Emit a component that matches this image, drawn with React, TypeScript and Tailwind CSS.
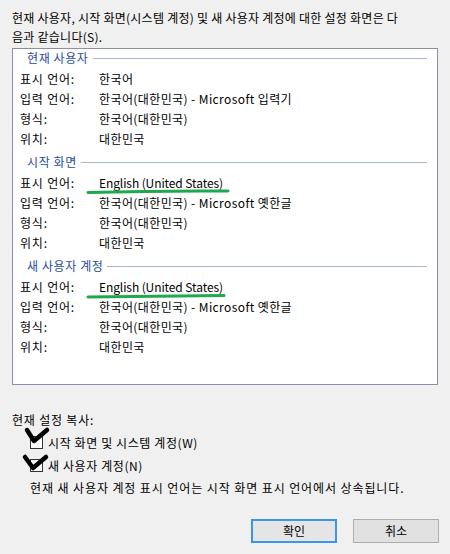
import React from "react";

type Row = { label: string; value: string; latin?: boolean };

const sections: { title: string; rows: Row[] }[] = [
  {
    title: "현재 사용자",
    rows: [
      { label: "표시 언어:", value: "한국어" },
      { label: "입력 언어:", value: "한국어(대한민국) - Microsoft 입력기" },
      { label: "형식:", value: "한국어(대한민국)" },
      { label: "위치:", value: "대한민국" },
    ],
  },
  {
    title: "시작 화면",
    rows: [
      { label: "표시 언어:", value: "English (United States)", latin: true },
      { label: "입력 언어:", value: "한국어(대한민국) - Microsoft 옛한글" },
      { label: "형식:", value: "한국어(대한민국)" },
      { label: "위치:", value: "대한민국" },
    ],
  },
  {
    title: "새 사용자 계정",
    rows: [
      { label: "표시 언어:", value: "English (United States)", latin: true },
      { label: "입력 언어:", value: "한국어(대한민국) - Microsoft 옛한글" },
      { label: "형식:", value: "한국어(대한민국)" },
      { label: "위치:", value: "대한민국" },
    ],
  },
];

function Section({ title, rows, first }: { title: string; rows: Row[]; first?: boolean }) {
  return (
    <div className={first ? "" : "mt-[2px]"}>
      <div className={`flex items-center pl-[14px] pr-[10px] ${first ? "h-[18px]" : "h-[22px]"}`}>
        <span className="tracking-[0.6px] text-[#1f4c9e]">{title}</span>
        <div className="ml-[4px] h-px flex-1 bg-[#a9b6cc]" />
      </div>
      <div className={first ? "mt-[2px]" : ""}>
        {rows.map((r) => (
          <div key={r.label} className="flex h-5 items-center pl-[7px]">
            <span className="w-[79px] shrink-0 tracking-[0.8px]">{r.label}</span>
            <span className={`whitespace-nowrap ${r.latin ? "tracking-[-0.1px]" : "tracking-[0.4px]"}`}>
              {r.value}
            </span>
          </div>
        ))}
      </div>
    </div>
  );
}

function CheckRow({ label }: { label: string }) {
  return (
    <div className="flex h-[23px] items-center pl-[30px]">
      <span className="h-[13px] w-[13px] shrink-0 border border-[#333] bg-white" />
      <span className="ml-[5px] tracking-[0.6px]">{label}</span>
    </div>
  );
}

export default function App() {
  return (
    <div
      className="relative h-[554px] w-[450px] overflow-hidden bg-[#f0f0f0] text-[12px] leading-5 text-black"
      style={{ fontFamily: '"Noto Sans CJK KR", "Noto Sans", sans-serif' }}
    >
      <p className="whitespace-nowrap px-3 pt-[8px] leading-[19px] tracking-[0.25px]">
        현재 사용자, 시작 화면(시스템 계정) 및 새 사용자 계정에 대한 설정 화면은 다
        <br />
        음과 같습니다(S).
      </p>

      <div className="mx-3 mt-[2px] h-[337px] w-[426px] border border-[#8e8ea2] bg-white">
        {sections.map((s, i) => (
          <Section key={s.title} title={s.title} rows={s.rows} first={i === 0} />
        ))}
      </div>

      <div className="mt-[25px] h-5 pl-3 tracking-[0.8px]">현재 설정 복사:</div>
      <div className="mt-px">
        <CheckRow label="시작 화면 및 시스템 계정(W)" />
        <CheckRow label="새 사용자 계정(N)" />
      </div>
      <div className="mt-px h-5 pl-[30px] tracking-[0.9px]">
        현재 새 사용자 계정 표시 언어는 시작 화면 표시 언어에서 상속됩니다.
      </div>

      <div className="mt-[21px] flex justify-end gap-4 pr-[11px]">
        <button className="h-6 w-[86px] border-2 border-[#3c96e8] bg-[#e5e5e5] text-[12px]">확인</button>
        <button className="h-6 w-[86px] border border-[#adadad] bg-[#e1e1e1] text-[12px]">취소</button>
      </div>

      {/* hand-drawn marks on top */}
      <svg
        className="pointer-events-none absolute left-0 top-0"
        width="450"
        height="554"
        viewBox="0 0 450 554"
      >
        <path d="M88 192.5 Q158 190.5 228 191" stroke="#1fa84c" strokeWidth="3" strokeLinecap="round" fill="none" />
        <path d="M88 297 Q156 296 224 295.5" stroke="#1fa84c" strokeWidth="3" strokeLinecap="round" fill="none" />
        <path d="M27 430 L34 441 L47 430" stroke="#000" strokeWidth="4.5" strokeLinecap="round" strokeLinejoin="round" fill="none" />
        <path d="M25 457 L33 468 L46 457" stroke="#000" strokeWidth="4.5" strokeLinecap="round" strokeLinejoin="round" fill="none" />
      </svg>
    </div>
  );
}
